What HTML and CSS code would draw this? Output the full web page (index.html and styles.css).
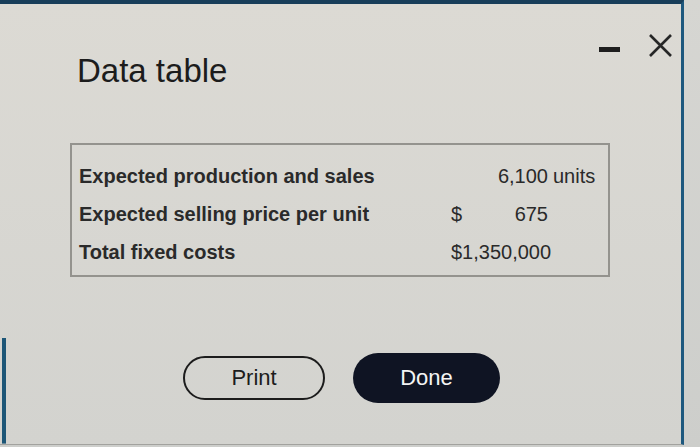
FILE: index.html
```html
<!DOCTYPE html>
<html lang="en">
<head>
<meta charset="utf-8">
<title>Data table</title>
<link rel="stylesheet" href="styles.css">
</head>
<body>
<div class="dialog">
  <div class="header">
    <h1 class="title">Data table</h1>
    <svg class="controls" width="78" height="24" viewBox="0 0 78 24" aria-hidden="true">
      <rect x="4" y="13" width="21" height="5" fill="#1e1e1e"/>
      <path d="M55 1 L76 22 M76 1 L55 22" stroke="#262626" stroke-width="2.6" fill="none"/>
    </svg>
  </div>
  <div class="data-box">
    <div class="data-grid">
      <div class="label">Expected production and sales</div>
      <div class="cur"></div>
      <div class="amount">6,100</div>
      <div class="unit">units</div>

      <div class="label">Expected selling price per unit</div>
      <div class="cur">$</div>
      <div class="amount">675</div>
      <div class="unit"></div>

      <div class="label">Total fixed costs</div>
      <div class="total">$1,350,000</div>
    </div>
  </div>
  <div class="actions">
    <button class="btn btn-print">Print</button>
    <button class="btn btn-done">Done</button>
  </div>
</div>
</body>
</html>
```

FILE: styles.css
```css
html, body {
  margin: 0;
  padding: 0;
}

body {
  width: 700px;
  height: 447px;
  overflow: hidden;
  background: linear-gradient(to bottom, #d6d6d2, #cdcecb);
  font-family: "Liberation Sans", Arial, Helvetica, sans-serif;
}

.dialog {
  box-sizing: border-box;
  width: 684px;
  height: 445px;
  border-top: 4px solid #183e5a;
  border-right: 3px solid #1d587e;
  border-bottom: 1px solid #a2a29e;
  background:
    linear-gradient(#1d5677, #1d5677) no-repeat 2px 100% / 4px 24%,
    linear-gradient(to bottom, #dcdad4, #d3d3cf);
}

.header {
  display: flex;
  justify-content: space-between;
  align-items: flex-start;
  padding: 30px 8px 0 77px;
}

.title {
  margin: 20px 0 0 0;
  font-size: 33px;
  line-height: 33px;
  font-weight: normal;
  color: #1c1c1c;
  letter-spacing: 0;
}

.controls {
  display: block;
}

.data-box {
  margin: 56px 0 0 70px;
  width: 540px;
  box-sizing: border-box;
  border: 2px solid #94938e;
  padding: 12px 0 4px 7px;
}

.data-grid {
  display: grid;
  grid-template-columns: 372px 20px 77px auto;
  grid-auto-rows: 38px;
  font-size: 20px;
  line-height: 38px;
  color: #2a2a2a;
}

.label {
  font-weight: bold;
  white-space: nowrap;
}

.cur {
  text-align: left;
}

.amount {
  text-align: right;
}

.unit {
  padding-left: 5px;
}

.total {
  grid-column: 2 / -1;
  white-space: nowrap;
}

.actions {
  display: flex;
  align-items: center;
  gap: 28px;
  margin-top: 76px;
  padding-left: 183px;
}

.btn {
  font-family: "Liberation Sans", Arial, Helvetica, sans-serif;
  font-size: 22px;
  box-sizing: border-box;
  border-radius: 25px;
  padding: 0;
  cursor: pointer;
}

.btn-print {
  width: 142px;
  height: 44px;
  background: transparent;
  border: 2px solid #1c1c1c;
  color: #1c1c1c;
}

.btn-done {
  width: 147px;
  height: 50px;
  background: #0f1423;
  border: none;
  color: #f4f4f4;
}
```
